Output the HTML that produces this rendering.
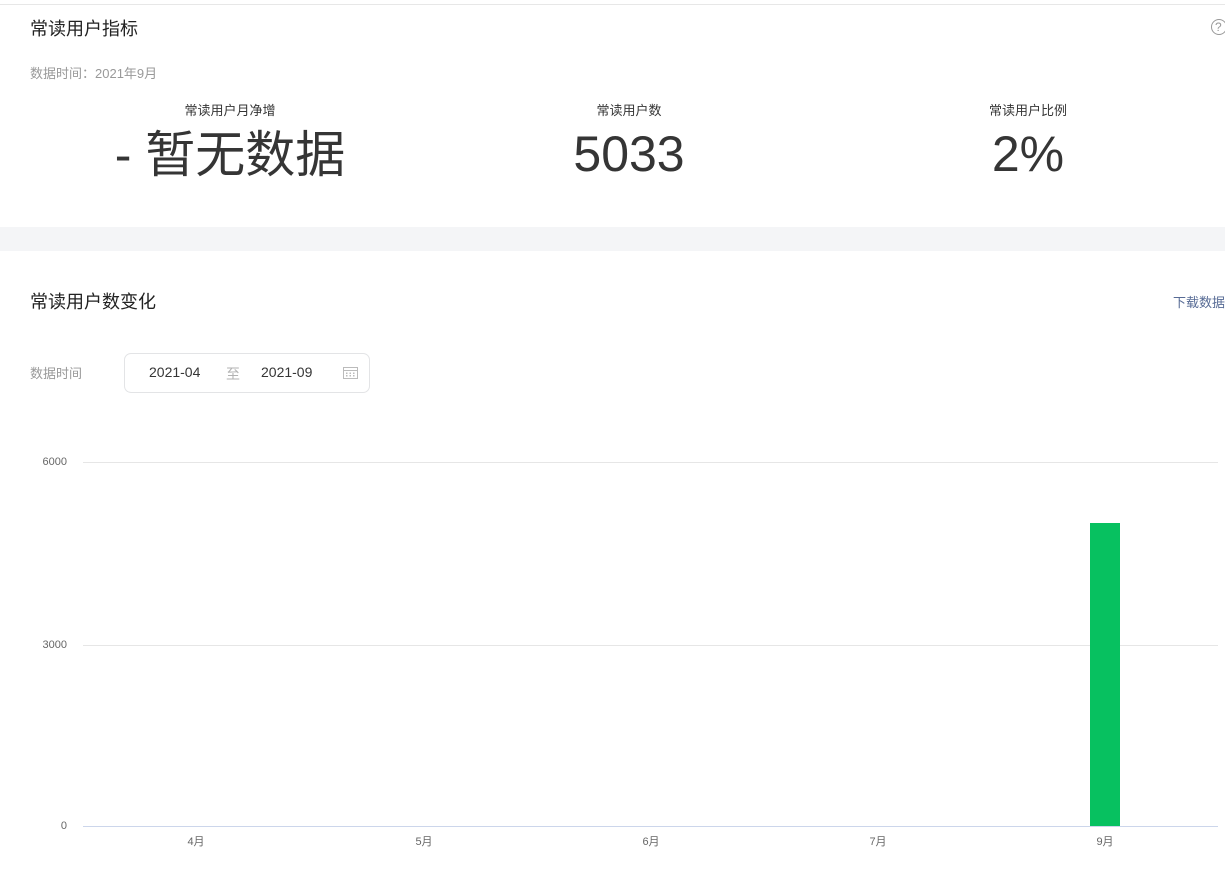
<!DOCTYPE html>
<html><head><meta charset="utf-8"><style>
*{margin:0;padding:0;box-sizing:border-box}
body{width:1225px;height:893px;background:#fff;position:relative;overflow:hidden;font-family:"Liberation Sans","Noto Sans CJK SC",sans-serif;color:#353535}
.a{position:absolute;white-space:nowrap}
.c{transform:translateX(-50%);text-align:center}
.big{font-size:50px;line-height:50px;color:#353535}
.lab{font-size:13px;color:#353535}
.yl{font-size:11px;color:#666;right:1158px;text-align:right}
.xl{font-size:11px;color:#666;top:833px}
.grid{position:absolute;left:83px;width:1135px;height:1px;background:#e6e6e6}
</style></head><body>
<div class="a" style="left:0;top:4px;width:1225px;height:1px;background:#e7e7e7"></div>
<div class="a" style="left:30px;top:15px;font-size:18px;color:#222">常读用户指标</div>
<div class="a" style="left:1211px;top:19px;width:16px;height:16px;border:1px solid #999;border-radius:50%;font-size:12px;color:#999;line-height:14px;padding-left:3px">?</div>
<div class="a" style="left:30px;top:63px;font-size:13px;color:#999">数据时间：2021年9月</div>
<div class="a c lab" style="left:230px;top:100px">常读用户月净增</div>
<div class="a c lab" style="left:629px;top:100px">常读用户数</div>
<div class="a c lab" style="left:1028px;top:100px">常读用户比例</div>
<div class="a c big" style="left:230px;top:130px">- 暂无数据</div>
<div class="a c big" style="left:629px;top:129px">5033</div>
<div class="a c big" style="left:1028px;top:129px">2%</div>
<div class="a" style="left:0;top:227px;width:1225px;height:24px;background:#f4f5f7"></div>
<div class="a" style="left:30px;top:288px;font-size:18px;color:#222">常读用户数变化</div>
<div class="a" style="left:1173px;top:292px;font-size:13px;color:#576b95">下载数据</div>
<div class="a" style="left:30px;top:363px;font-size:13px;color:#999">数据时间</div>
<div class="a" style="left:124px;top:353px;width:246px;height:40px;border:1px solid #e3e4e6;border-radius:7px"></div>
<div class="a" style="left:149px;top:364px;font-size:14px;color:#353535">2021-04</div>
<div class="a" style="left:226px;top:364px;font-size:14px;color:#b2b2b2">至</div>
<div class="a" style="left:261px;top:364px;font-size:14px;color:#353535">2021-09</div>
<svg class="a" style="left:343px;top:366px" width="15" height="13" viewBox="0 0 15 13"><rect x="0.5" y="1.5" width="14" height="11" fill="none" stroke="#bbb"/><line x1="0.5" y1="4.5" x2="14.5" y2="4.5" stroke="#bbb"/><g fill="#bbb"><rect x="3" y="6.5" width="1.5" height="1.5"/><rect x="6.5" y="6.5" width="1.5" height="1.5"/><rect x="10" y="6.5" width="1.5" height="1.5"/><rect x="3" y="9" width="1.5" height="1.5"/><rect x="6.5" y="9" width="1.5" height="1.5"/><rect x="10" y="9" width="1.5" height="1.5"/></g></svg>
<div class="grid" style="top:462px"></div>
<div class="grid" style="top:645px"></div>
<div class="grid" style="top:826px;background:#ccd6eb"></div>
<div class="a yl" style="top:456px">6000</div>
<div class="a yl" style="top:639px">3000</div>
<div class="a yl" style="top:820px">0</div>
<div class="a" style="left:1090px;top:523px;width:30px;height:303px;background:#07c160"></div>
<div class="a c xl" style="left:196px">4月</div>
<div class="a c xl" style="left:424px">5月</div>
<div class="a c xl" style="left:651px">6月</div>
<div class="a c xl" style="left:878px">7月</div>
<div class="a c xl" style="left:1105px">9月</div>
</body></html>
